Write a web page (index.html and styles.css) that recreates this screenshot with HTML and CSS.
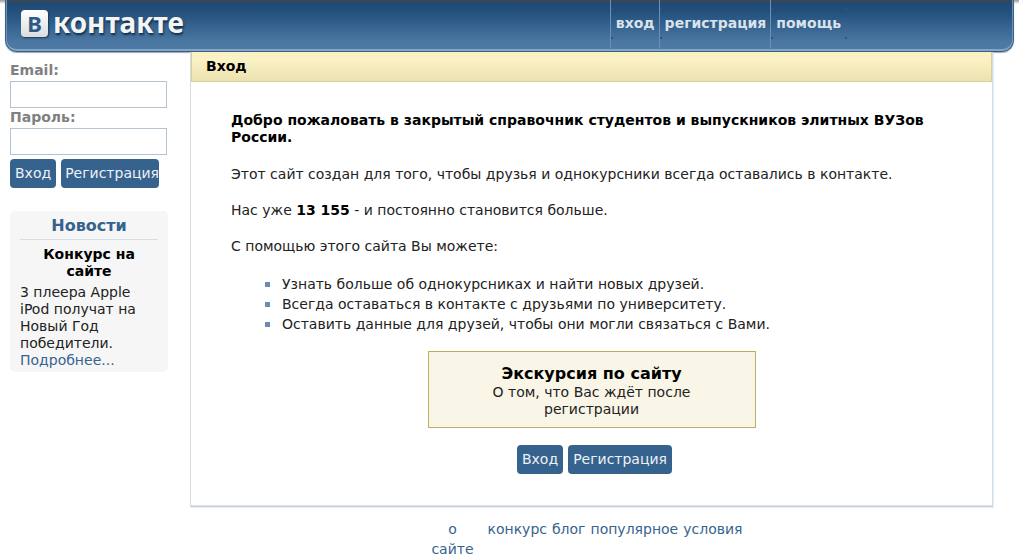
FILE: index.html
```html
<!DOCTYPE html>
<html lang="ru">
<head>
    <meta charset="UTF-8">
    <meta name="viewport" content="width=device-width, initial-scale=1.0">
    <title>В контакте | Вход</title>
    <link rel="stylesheet" href="styles.css">
</head>
<body>
    <header class="header">
        <a class="logo" href="#">
            <span class="logo-mark">В</span>
            <span class="logo-text">контакте</span>
        </a>
        <nav class="top-nav">
            <a href="#">вход</a>
            <a href="#">регистрация</a>
            <a href="#">помощь</a>
        </nav>
    </header>

    <div class="page">
        <aside class="sidebar">
            <form class="login">
                <label for="email">Email:</label>
                <input type="text" id="email" name="email">
                <label for="pass">Пароль:</label>
                <input type="password" id="pass" name="pass">
                <div class="login-buttons">
                    <button class="btn" type="button">Вход</button>
                    <button class="btn btn-tight" type="button">Регистрация</button>
                </div>
            </form>

            <section class="news">
                <h2>Новости</h2>
                <h3>Конкурс на сайте</h3>
                <p>3 плеера Apple iPod получат на Новый Год победители. <a href="#">Подробнее...</a></p>
            </section>
        </aside>

        <div class="main">
            <main class="content">
                <h1>Вход</h1>
                <div class="welcome">
                    <p><b>Добро пожаловать в закрытый справочник студентов и выпускников элитных ВУЗов России.</b></p>
                    <p>Этот сайт создан для того, чтобы друзья и однокурсники всегда оставались в контакте.</p>
                    <p>Нас уже <b>13 155</b> - и постоянно становится больше.</p>
                    <p>С помощью этого сайта Вы можете:</p>
                    <ul>
                        <li>Узнать больше об однокурсниках и найти новых друзей.</li>
                        <li>Всегда оставаться в контакте с друзьями по университету.</li>
                        <li>Оставить данные для друзей, чтобы они могли связаться с Вами.</li>
                    </ul>
                    <div class="tour">
                        <h2>Экскурсия по сайту</h2>
                        <p>О том, что Вас ждёт после регистрации</p>
                    </div>
                    <div class="buttons">
                        <button class="btn" type="button">Вход</button>
                        <button class="btn" type="button">Регистрация</button>
                    </div>
                </div>
            </main>

            <footer class="footer">
                <a class="about" href="#">о сайте</a>
                <a href="#">конкурс</a>
                <a href="#">блог</a>
                <a href="#">популярное</a>
                <a href="#">условия</a>
            </footer>
        </div>
    </div>
</body>
</html>
```
FILE: styles.css
```css
* {
    box-sizing: border-box;
}
body {
    margin: 0;
    font-family: Verdana, "DejaVu Sans", sans-serif;
    font-size: 14px;
    line-height: 17px;
    color: #222;
    background: linear-gradient(#999, #fff) 0 0 / 100% 4px no-repeat #fff;
}
a {
    color: #36638e;
    text-decoration: none;
}
h1, h2, h3, p, ul {
    margin: 0;
    padding: 0;
}
b, h3 {
    color: #000;
}

/* header */
.header {
    display: flex;
    justify-content: space-between;
    height: 52px;
    margin: 0 5px;
    padding: 0 168px 0 15px;
    background: linear-gradient(#3a4650, #1f4a75 4px, #24507d 12px, #4b77a3 42px, #4f7aa4);
    border: 1px solid #36618d;
    border-top: 0;
    border-radius: 0 0 12px 12px;
    box-shadow: inset 0 -2px 0 #86a5c3, inset 2px 0 0 -1px #6d92b6, inset -2px 0 0 -1px #6d92b6, 0 1px 1px #9aa9b8;
}
.logo {
    display: flex;
    align-items: center;
    gap: 5px;
    padding-bottom: 5px;
    color: #f4f4f4;
}
.logo-mark {
    width: 27px;
    height: 27px;
    border-radius: 4px;
    background: linear-gradient(#fff, #dcdcdc);
    box-shadow: 1px 1px 2px #173a5f;
    color: #2c5a88;
    font: bold 22px/27px "Noto Sans", sans-serif;
    text-align: center;
}
.logo-text {
    padding-bottom: 3px;
    font: bold 28px/34px "Noto Sans", sans-serif;
    text-shadow: 1px 2px 2px #12304f;
}
.top-nav {
    /* small dark notches on the separators */
    --notch: linear-gradient(#2b5380, #2b5380);
    display: flex;
    height: 50px;
}
.top-nav a {
    padding: 15px 4px 0 5px;
    border-left: 1px solid #6c91b6;
    background: var(--notch) 0 8px / 2px 2px no-repeat, var(--notch) 0 37px / 2px 2px no-repeat;
    color: #dae3ea;
    font-weight: bold;
}
.top-nav a:last-child {
    padding-right: 6px;
    margin-right: -2px;
    background: var(--notch) 0 8px / 2px 2px no-repeat, var(--notch) 0 37px / 2px 2px no-repeat,
        var(--notch) 100% 8px / 2px 2px no-repeat, var(--notch) 100% 37px / 2px 2px no-repeat;
}

/* columns */
.page {
    display: flex;
    gap: 22px;
    padding: 0 26px 0 10px;
}
.sidebar {
    flex: none;
    width: 158px;
    padding-top: 10px;
}
.main {
    flex: 1;
}

/* login form */
.login label {
    display: block;
    height: 19px;
    color: #808080;
    font-weight: bold;
}
.login input {
    display: block;
    width: 157px;
    height: 27px;
    margin-bottom: 1px;
    padding: 2px 4px;
    border: 1px solid #b5c3d0;
    font: inherit;
}
.login-buttons {
    display: flex;
    gap: 5px;
    margin-top: 4px;
}
.btn {
    height: 29px;
    padding: 0 5px;
    border: 0;
    border-radius: 4px;
    background: #36638e;
    color: #eef2f6;
    font: inherit;
}
.btn-tight {
    padding: 0 0 0 4px;
}

/* news */
.news {
    margin-top: 23px;
    padding: 6px 10px 3px;
    border-radius: 5px;
    background: #f6f6f6;
}
.news h2 {
    padding-bottom: 5px;
    border-bottom: 1px solid #d5dde6;
    color: #36638e;
    font-size: 16px;
    text-align: center;
}
.news h3 {
    padding: 6px 10px 4px;
    font-size: 14px;
    text-align: center;
}

/* content */
.content {
    border: 1px solid #d3dde6;
    border-top: 0;
    border-bottom-color: #c5d0da;
    box-shadow: inset 0 -1px 0 #dae2ea, 1px 1px 0 #e6edf3;
}
.content h1 {
    height: 30px;
    padding: 6px 14px;
    border: 1px solid #dccf9b;
    border-top: 0;
    background: linear-gradient(#faf1c4 30%, #ece2b0);
    color: #000;
    font-size: 14px;
}
.welcome {
    padding: 30px 40px 32px;
}
.welcome > p {
    margin-bottom: 20px;
}
.welcome > p:nth-of-type(n+2) {
    margin-bottom: 19px;
}
.welcome ul {
    list-style: none;
}
.welcome li {
    display: flex;
    align-items: center;
    gap: 12px;
    padding-left: 34px;
    line-height: 20px;
}
.welcome li::before {
    content: "";
    width: 5px;
    height: 5px;
    background: #6d8db0;
}
.tour {
    width: 328px;
    margin: 17px auto;
    padding: 12px 60px 9px;
    border: 1px solid #bfae62;
    background: #f9f5e7;
    text-align: center;
}
.tour h2 {
    color: #000;
    font-size: 16px;
    line-height: 20px;
}
.buttons {
    display: flex;
    justify-content: center;
    gap: 5px;
    padding-left: 6px;
}

/* footer */
.footer {
    display: flex;
    justify-content: center;
    gap: 5px;
    padding: 12px 10px 0 0;
    line-height: 20px;
}
.footer .about {
    width: 44px;
    margin-right: 8px;
    text-align: center;
}
```
